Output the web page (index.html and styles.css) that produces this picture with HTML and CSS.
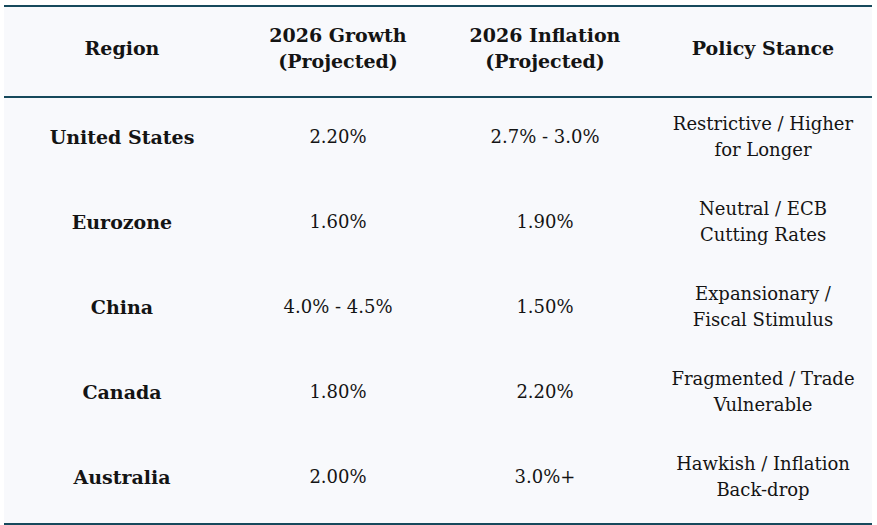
FILE: index.html
```html
<!DOCTYPE html>
<html lang="en">
<head>
<meta charset="utf-8">
<title>2026 Outlook</title>
<link rel="stylesheet" href="styles.css">
</head>
<body>
<div class="wrap">
<table class="outlook">
<colgroup>
<col class="c1"><col class="c2"><col class="c3"><col class="c4">
</colgroup>
<thead>
<tr>
<th>Region</th>
<th>2026 Growth<br>(Projected)</th>
<th>2026 Inflation<br>(Projected)</th>
<th>Policy Stance</th>
</tr>
</thead>
<tbody>
<tr><td class="name">United States</td><td>2.20%</td><td>2.7% - 3.0%</td><td>Restrictive / Higher for Longer</td></tr>
<tr><td class="name">Eurozone</td><td>1.60%</td><td>1.90%</td><td>Neutral / ECB Cutting Rates</td></tr>
<tr><td class="name">China</td><td>4.0% - 4.5%</td><td>1.50%</td><td>Expansionary / Fiscal Stimulus</td></tr>
<tr><td class="name">Canada</td><td>1.80%</td><td>2.20%</td><td>Fragmented / Trade Vulnerable</td></tr>
<tr><td class="name">Australia</td><td>2.00%</td><td>3.0%+</td><td>Hawkish / Inflation Back-drop</td></tr>
</tbody>
</table>
</div>
</body>
</html>
```
FILE: styles.css
```css
html, body {
  margin: 0;
  padding: 0;
  background: #ffffff;
}
.wrap {
  padding: 5px 5px 0 4px;
}
.outlook {
  width: 868px;
  border-collapse: collapse;
  table-layout: fixed;
  background: #f8f9fc;
  font-family: "DejaVu Serif", "Liberation Serif", serif;
  color: #141414;
  border-top: 2px solid #16495c;
  border-bottom: 2px solid #16495c;
}
.c1 { width: 236px; }
.c2 { width: 196px; }
.c3 { width: 218px; }
.c4 { width: 218px; }
.outlook th {
  height: 81px;
  padding: 0 14px 8px;
  font-size: 19px;
  font-weight: bold;
  line-height: 26px;
  text-align: center;
  vertical-align: middle;
  border-bottom: 2px solid #16495c;
}
.outlook td {
  height: 77px;
  padding: 0 14px 8px;
  font-size: 18px;
  line-height: 26px;
  text-align: center;
  vertical-align: middle;
}
.outlook td.name {
  font-weight: bold;
  font-size: 19px;
}
```
